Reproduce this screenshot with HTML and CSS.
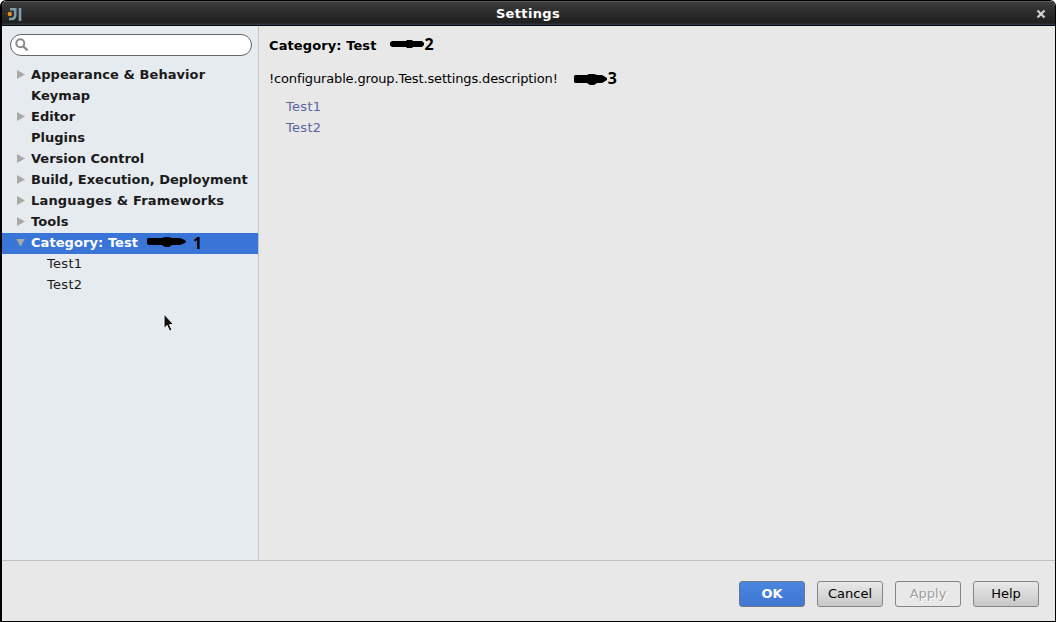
FILE: index.html
```html
<!DOCTYPE html>
<html lang="en">
<head>
    <meta charset="UTF-8">
    <title>Settings</title>
    <link rel="stylesheet" href="styles.css">
</head>
<body>
    <div class="window">
        <header class="titlebar">
            <svg class="logo" width="16" height="16" viewBox="0 0 16 16">
                <path d="M3 2.3h5.2v6q0 3.7-3.7 3.7H2" fill="none" stroke="#7f9dab" stroke-width="2.6"/>
                <path d="M13 1v13" stroke="#7f9dab" stroke-width="2.6"/>
                <circle cx="2.8" cy="7" r="2.2" fill="#e88a1c"/>
            </svg>
            <h1>Settings</h1>
            <svg class="close" width="10" height="10" viewBox="0 0 10 10">
                <path d="M1.5 1.5l7 7M8.5 1.5l-7 7" stroke="#d2d2d2" stroke-width="2.2"/>
            </svg>
        </header>

        <main class="content">
            <aside class="sidebar">
                <div class="search">
                    <svg width="14" height="14" viewBox="0 0 14 14">
                        <circle cx="5.3" cy="5.3" r="4" fill="none" stroke="#8c8c8c" stroke-width="2"/>
                        <path d="M8.3 8.3l4.2 4" stroke="#8c8c8c" stroke-width="2.4"/>
                    </svg>
                </div>
                <ul class="tree">
                    <li><span class="arrow"></span>Appearance &amp; Behavior</li>
                    <li><span class="arrow none"></span>Keymap</li>
                    <li class="tight"><span class="arrow"></span>Editor</li>
                    <li class="tight"><span class="arrow none"></span>Plugins</li>
                    <li class="tight"><span class="arrow"></span>Version Control</li>
                    <li class="tight"><span class="arrow"></span>Build, Execution, Deployment</li>
                    <li class="wide"><span class="arrow"></span>Languages &amp; Frameworks</li>
                    <li><span class="arrow"></span>Tools</li>
                    <li class="selected">
                        <span class="arrow open"></span>Category: Test
                        <svg class="mark" width="39" height="12" viewBox="0 0 39 12">
                            <path d="M1 2h14l3-1h4l3 1h8l5 2 1 2-1 1-5 2h-8l-3 2h-4l-3-2H2L0 8V3z"/>
                        </svg>
                        <b class="num">1</b>
                    </li>
                    <li class="child">Test1</li>
                    <li class="child">Test2</li>
                </ul>
            </aside>

            <section class="details">
                <h2>
                    Category: Test
                    <svg class="mark" width="36" height="10" viewBox="0 0 36 10">
                        <path d="M2 2h14l1-1h5l1 1h9l2 2v2l-2 2h-9l-1 1h-5l-1-1H2L0 6.5v-3z"/>
                    </svg>
                    <b class="num">2</b>
                </h2>
                <p>
                    <span>!configurable.group.Test.settings.description!</span>
                    <svg class="mark" width="34" height="12" viewBox="0 0 34 12">
                        <path d="M1 2h12l2-1h5l3 1h5l5 3v2l-5 3h-5l-3 2h-4l-3-2H1L0 9V3z"/>
                    </svg>
                    <b class="num">3</b>
                </p>
                <a>Test1</a>
                <a>Test2</a>
            </section>
        </main>

        <footer class="buttons">
            <button class="ok">OK</button>
            <button>Cancel</button>
            <button disabled>Apply</button>
            <button>Help</button>
        </footer>

        <svg class="cursor" width="12" height="20" viewBox="0 0 12 20">
            <path d="M1 1v14.5l3-3 2.7 5.7 2.4-1.1-2.6-5.4h4.3z" fill="#111" stroke="#fff"/>
        </svg>
    </div>
</body>
</html>
```
FILE: styles.css
```css
* {
    margin: 0;
    padding: 0;
    box-sizing: border-box;
}

body {
    font-family: "DejaVu Sans", sans-serif;
    font-size: 13px;
    background: #fff;
    overflow: hidden;
}

.window {
    position: relative;
    width: 1056px;
    height: 622px;
    display: flex;
    flex-direction: column;
    background: #e8e8e8;
    border: solid #000;
    border-width: 1px 1px 1px 2px;
    border-radius: 6px 6px 0 0;
    overflow: hidden;
}

.titlebar {
    display: flex;
    align-items: center;
    height: 25px;
    padding: 0 9px 0 5px;
    background: linear-gradient(#3c3c3c, #303030 35%, #202020 90%, #34414e);
    border-top: 1px solid #5a5a5a;
    border-bottom: 1px solid #05070a;
    color: #fff;
}

.titlebar h1 {
    flex: 1;
    padding-right: 3px;
    font-size: 13px;
    letter-spacing: 0.35px;
    text-align: center;
}

.logo {
    margin-top: 2px;
}

.close {
    margin-top: 1px;
}

.content {
    flex: 1;
    display: flex;
    border-bottom: 1px solid #c0c0c0;
}

.sidebar {
    width: 257px;
    padding-top: 8px;
    background: #e6ebf0;
    border-right: 1px solid #c0c4c8;
}

.search {
    display: flex;
    align-items: center;
    width: 242px;
    height: 22px;
    margin: 0 0 9px 8px;
    padding-left: 4px;
    background: #fff;
    border: 1px solid #666;
    border-radius: 11px;
}

.tree {
    list-style: none;
    font-weight: bold;
    letter-spacing: 0.07px;
    color: #1a1a1a;
}

.tree li {
    display: flex;
    align-items: center;
    height: 21px;
    padding: 0 0 2px 15px;
    white-space: nowrap;
}

.tree .tight {
    letter-spacing: 0;
}

.tree .wide {
    letter-spacing: 0.18px;
}

.arrow {
    width: 8px;
    height: 9px;
    margin-right: 6px;
    background: #a9a9a9;
    clip-path: polygon(0 0, 100% 50%, 0 100%);
}

.arrow.open {
    width: 9px;
    height: 8px;
    margin: 0 6px 0 -1px;
    clip-path: polygon(0 0, 100% 0, 50% 100%);
}

.arrow.none {
    background: none;
}

.tree .selected {
    background: #3875d7;
    color: #fff;
}

.tree .child {
    padding-left: 45px;
    font-weight: normal;
    letter-spacing: 0.3px;
}

.num {
    font: bold 16px/20px "Noto Sans", sans-serif;
    letter-spacing: 0;
    color: #000;
}

.selected .mark {
    margin: -2px 7px 0 9px;
}

.selected .num {
    margin-top: 1px;
}

.details {
    flex: 1;
    padding: 9px 0 0 10px;
}

.details h2,
.details p {
    display: flex;
    align-items: center;
    height: 20px;
    font-size: 13px;
    color: #000;
}

.details h2 {
    letter-spacing: 0.1px;
}

.details h2 .num {
    margin: -2px 0 0 -1px;
}

.details p {
    margin: 13px 0 8px;
    letter-spacing: -0.15px;
}

.details h2 .mark {
    margin: -2px 0 0 13px;
}

.details p .mark {
    margin: 1px 0 0 16px;
}

.details a {
    display: block;
    height: 21px;
    padding-left: 17px;
    line-height: 21px;
    letter-spacing: 0.3px;
    color: #5a64a0;
}

.buttons {
    display: flex;
    justify-content: flex-end;
    gap: 12px;
    height: 60px;
    padding: 20px 16px 0 0;
}

.buttons button {
    width: 66px;
    height: 26px;
    padding-bottom: 2px;
    font: 13px "DejaVu Sans", sans-serif;
    color: #000;
    background: linear-gradient(#e8e8e8, #c8c8c8);
    border: 1px solid #858585;
    border-radius: 3px;
}

.buttons .ok {
    font-weight: bold;
    color: #fff;
    background: linear-gradient(#4a86e0, #3f76d0);
    border-color: #6c7686;
}

.buttons button:disabled {
    color: #a0a0a0;
    text-shadow: 1px 1px #fff;
    background: #e8e8e8;
}

/* mouse pointer over the tree */
.cursor {
    position: absolute;
    left: 161px;
    top: 312px;
}
```
